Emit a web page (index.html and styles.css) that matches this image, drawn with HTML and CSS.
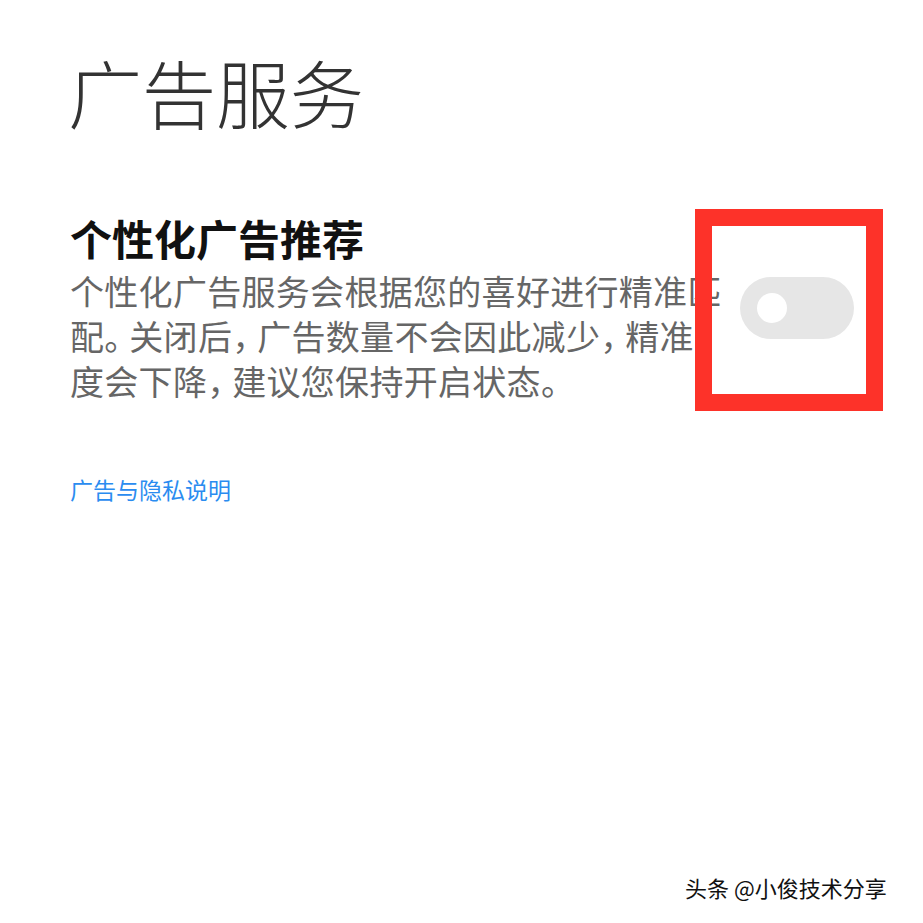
FILE: index.html
```html
<!DOCTYPE html>
<html>
<head>
    <meta charset="utf-8">
    <title>广告服务</title>
    <link rel="stylesheet" href="styles.css">
</head>
<body>
<div class="page">
    <h1 class="title">广告服务</h1>
    <div class="item">
        <div class="info">
            <h2>个性化广告推荐</h2>
            <p class="desc">个性化广告服务会根据您的喜好进行精准匹配<span class="pc">。</span>关闭后<span class="pc">，</span>广告数量不会因此减少<span class="pc">，</span>精准度会下降<span class="pc">，</span>建议您保持开启状态。</p>
        </div>
        <div class="switch">
            <span class="knob"></span>
            <div class="mark"></div>
        </div>
    </div>
    <a class="link" href="#">广告与隐私说明</a>
</div>
<div class="watermark">头条 @小俊技术分享</div>
</body>
</html>
```

FILE: styles.css
```css
body {
    margin: 0;
    background: #fff;
    font-family: "Noto Sans CJK SC", "Noto Sans", sans-serif;
}

.page {
    padding: 46px 0 0 70px;
}

.title {
    margin: 0 0 0 -2px;
    font-size: 74px;
    line-height: 90px;
    font-weight: 300;
    color: #333;
}

.item {
    display: flex;
    align-items: center;
    gap: 16px;
    margin-top: 77px;
}

.info {
    width: 654px;
}

.info h2 {
    margin: 0;
    font-size: 42px;
    line-height: 50px;
    font-weight: bold;
    color: #111;
}

.desc {
    margin: 5px 0 0;
    font-size: 34px;
    line-height: 45px;
    letter-spacing: 0.3px;
    color: #666;
}

/* 标点收窄 */
.pc {
    font-feature-settings: "halt";
    letter-spacing: 8px;
}

.switch {
    position: relative;
    width: 114px;
    height: 62px;
    border-radius: 31px;
    background: #e6e6e6;
}

.knob {
    position: absolute;
    left: 17px;
    top: 16px;
    width: 30px;
    height: 30px;
    border-radius: 50%;
    background: #fff;
}

.mark {
    position: absolute;
    left: -45px;
    top: -68px;
    width: 154px;
    height: 168px;
    border: 17px solid #fd3229;
}

.link {
    display: block;
    margin-top: 71px;
    font-size: 23px;
    line-height: 30px;
    color: #2a8cf0;
    text-decoration: none;
}

.watermark {
    position: absolute;
    left: 685px;
    top: 872px;
    font-size: 22px;
    line-height: 30px;
    color: #111;
    text-shadow: 0 0 2px #fff, 1px 1px 0 #fff;
}
```
